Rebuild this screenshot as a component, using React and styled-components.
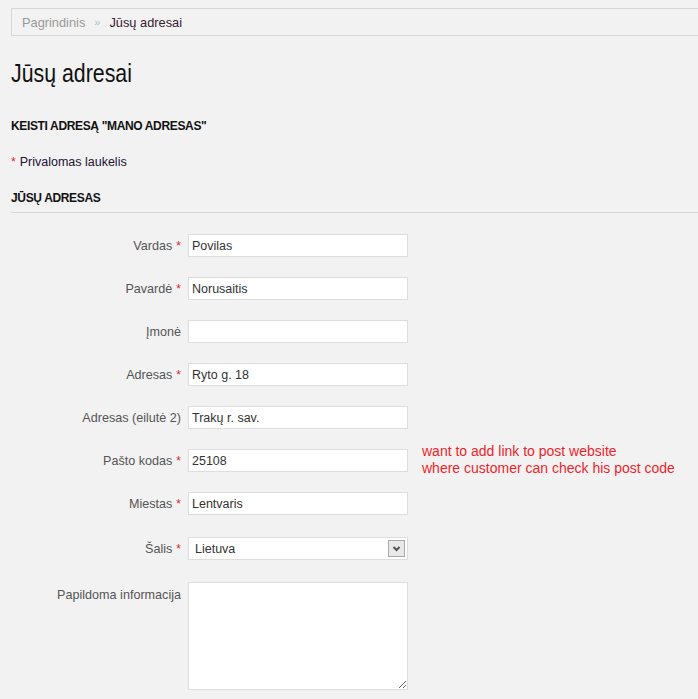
import React from 'react'
import styled, { createGlobalStyle } from 'styled-components'

const GlobalStyle = createGlobalStyle`
  html, body {
    margin: 0;
    padding: 0;
    background: #f2f2f2;
  }
  body {
    font-family: "Liberation Sans", Arial, sans-serif;
    font-size: 12px;
    color: #333333;
  }
`;

const Page = styled.div`
  width: 698px;
  height: 699px;
  overflow: hidden;
  padding: 8px 0 0 11px;
  box-sizing: border-box;
`;

const Breadcrumbs = styled.div`
  display: flex;
  align-items: center;
  gap: 9px;
  height: 26px;
  padding-left: 10px;
  margin-right: -2px;
  border: 1px solid #d6d6d6;
  border-right: none;
  font-size: 12.8px;

  .crumb_link {
    color: #999999;
  }

  .crumb_sep {
    color: #bbbbbb;
    font-size: 11px;
  }

  .crumb_now {
    color: #3a2030;
  }
`;

const Title = styled.h1`
  margin: 22px 0 0;
  font-weight: normal;
  font-size: 26px;
  line-height: 30px;
  color: #111111;
  transform: scaleX(0.82);
  transform-origin: left center;
`;

const SubTitle = styled.h2`
  margin: ${p => p.$top}px 0 0;
  font-size: 12px;
  font-weight: bold;
  line-height: 14px;
  letter-spacing: -0.35px;
  color: #111111;
`;

const Required = styled.div`
  margin-top: 22px;
  font-size: 12.5px;
  color: #221133;
`;

const Star = styled.span`
  color: #e2232c;
  font-size: 12px;
  margin-right: ${p => p.$after ? 0 : 4}px;
  margin-left: ${p => p.$after ? 4 : 0}px;
`;

const Rule = styled.div`
  height: 1px;
  background: #d9d9d9;
  margin-top: 7px;
`;

const Form = styled.div`
  display: flex;
  flex-direction: column;
  gap: 20px;
  margin-top: 21px;
`;

const Row = styled.div`
  display: flex;
  align-items: ${p => p.$top ? 'flex-start' : 'center'};
  height: ${p => p.$tall ? 108 : 23}px;
  margin-top: ${p => p.$extra || 0}px;
`;

const Label = styled.label`
  width: 170px;
  flex: none;
  text-align: right;
  color: #555555;
  font-size: 12.6px;
  white-space: nowrap;
  padding-top: ${p => p.$top ? 6 : 0}px;
`;

const Field = styled.div`
  position: relative;
  margin-left: 7px;
  width: 220px;
  height: 100%;
  flex: none;
`;

const TextInput = styled.input`
  box-sizing: border-box;
  width: 100%;
  height: 100%;
  margin: 0;
  padding: 0 3px;
  border: 1px solid #dddddd;
  background: #ffffff;
  font-family: "Liberation Sans", Arial, sans-serif;
  font-size: 12.5px;
  color: #333333;
  outline: none;
`;

const Select = styled.select`
  box-sizing: border-box;
  width: 100%;
  height: 100%;
  margin: 0;
  padding: 0 6px;
  border: 1px solid #dddddd;
  background: #ffffff;
  appearance: none;
  font-family: "Liberation Sans", Arial, sans-serif;
  font-size: 12.5px;
  color: #333333;
  outline: none;
`;

const SelectArrow = styled.div`
  position: absolute;
  top: 3px;
  right: 3px;
  width: 15px;
  height: 15px;
  border: 1px solid #a9a9a9;
  background: #e9e9e9;
  display: flex;
  align-items: center;
  justify-content: center;
  pointer-events: none;
`;

const TextArea = styled.textarea`
  box-sizing: border-box;
  width: 100%;
  height: 100%;
  margin: 0;
  padding: 4px;
  border: 1px solid #dddddd;
  background: #ffffff;
  font-family: "Liberation Sans", Arial, sans-serif;
  font-size: 12px;
  outline: none;
`;

const Note = styled.div`
  margin-left: 14px;
  align-self: flex-start;
  margin-top: -6px;
  font-size: 14px;
  line-height: 17px;
  color: #ee1f2b;
  white-space: nowrap;
`;

const fields = [
  { label: 'Vardas', value: 'Povilas', req: true },
  { label: 'Pavardė', value: 'Norusaitis', req: true },
  { label: 'Įmonė', value: '' },
  { label: 'Adresas', value: 'Ryto g. 18', req: true },
  { label: 'Adresas (eilutė 2)', value: 'Trakų r. sav.' },
  { label: 'Pašto kodas', value: '25108', req: true, note: true },
  { label: 'Miestas', value: 'Lentvaris', req: true },
];

function App() {
  return (
    <Page>
      <GlobalStyle />
      <Breadcrumbs>
        <span className="crumb_link">Pagrindinis</span>
        <span className="crumb_sep">»</span>
        <span className="crumb_now">Jūsų adresai</span>
      </Breadcrumbs>
      <Title>Jūsų adresai</Title>
      <SubTitle $top={31}>KEISTI ADRESĄ "MANO ADRESAS"</SubTitle>
      <Required><Star>*</Star>Privalomas laukelis</Required>
      <SubTitle $top={22}>JŪSŲ ADRESAS</SubTitle>
      <Rule />
      <Form>
        {fields.map(f => (
          <Row key={f.label}>
            <Label>{f.label}{f.req && <Star $after>*</Star>}</Label>
            <Field><TextInput defaultValue={f.value} /></Field>
            {f.note && (
              <Note>want to add link to post website<br />where customer can check his post code</Note>
            )}
          </Row>
        ))}
        <Row $extra={2}>
          <Label>Šalis<Star $after>*</Star></Label>
          <Field>
            <Select defaultValue="LT">
              <option value="LT">Lietuva</option>
            </Select>
            <SelectArrow>
              <svg width="9" height="7" viewBox="0 0 9 7">
                <path d="M1.5 2 L4.5 5 L7.5 2" fill="none" stroke="#555" strokeWidth="2" />
              </svg>
            </SelectArrow>
          </Field>
        </Row>
        <Row $tall $top $extra={2}>
          <Label $top>Papildoma informacija</Label>
          <Field><TextArea /></Field>
        </Row>
      </Form>
    </Page>
  );
}

export default App;
